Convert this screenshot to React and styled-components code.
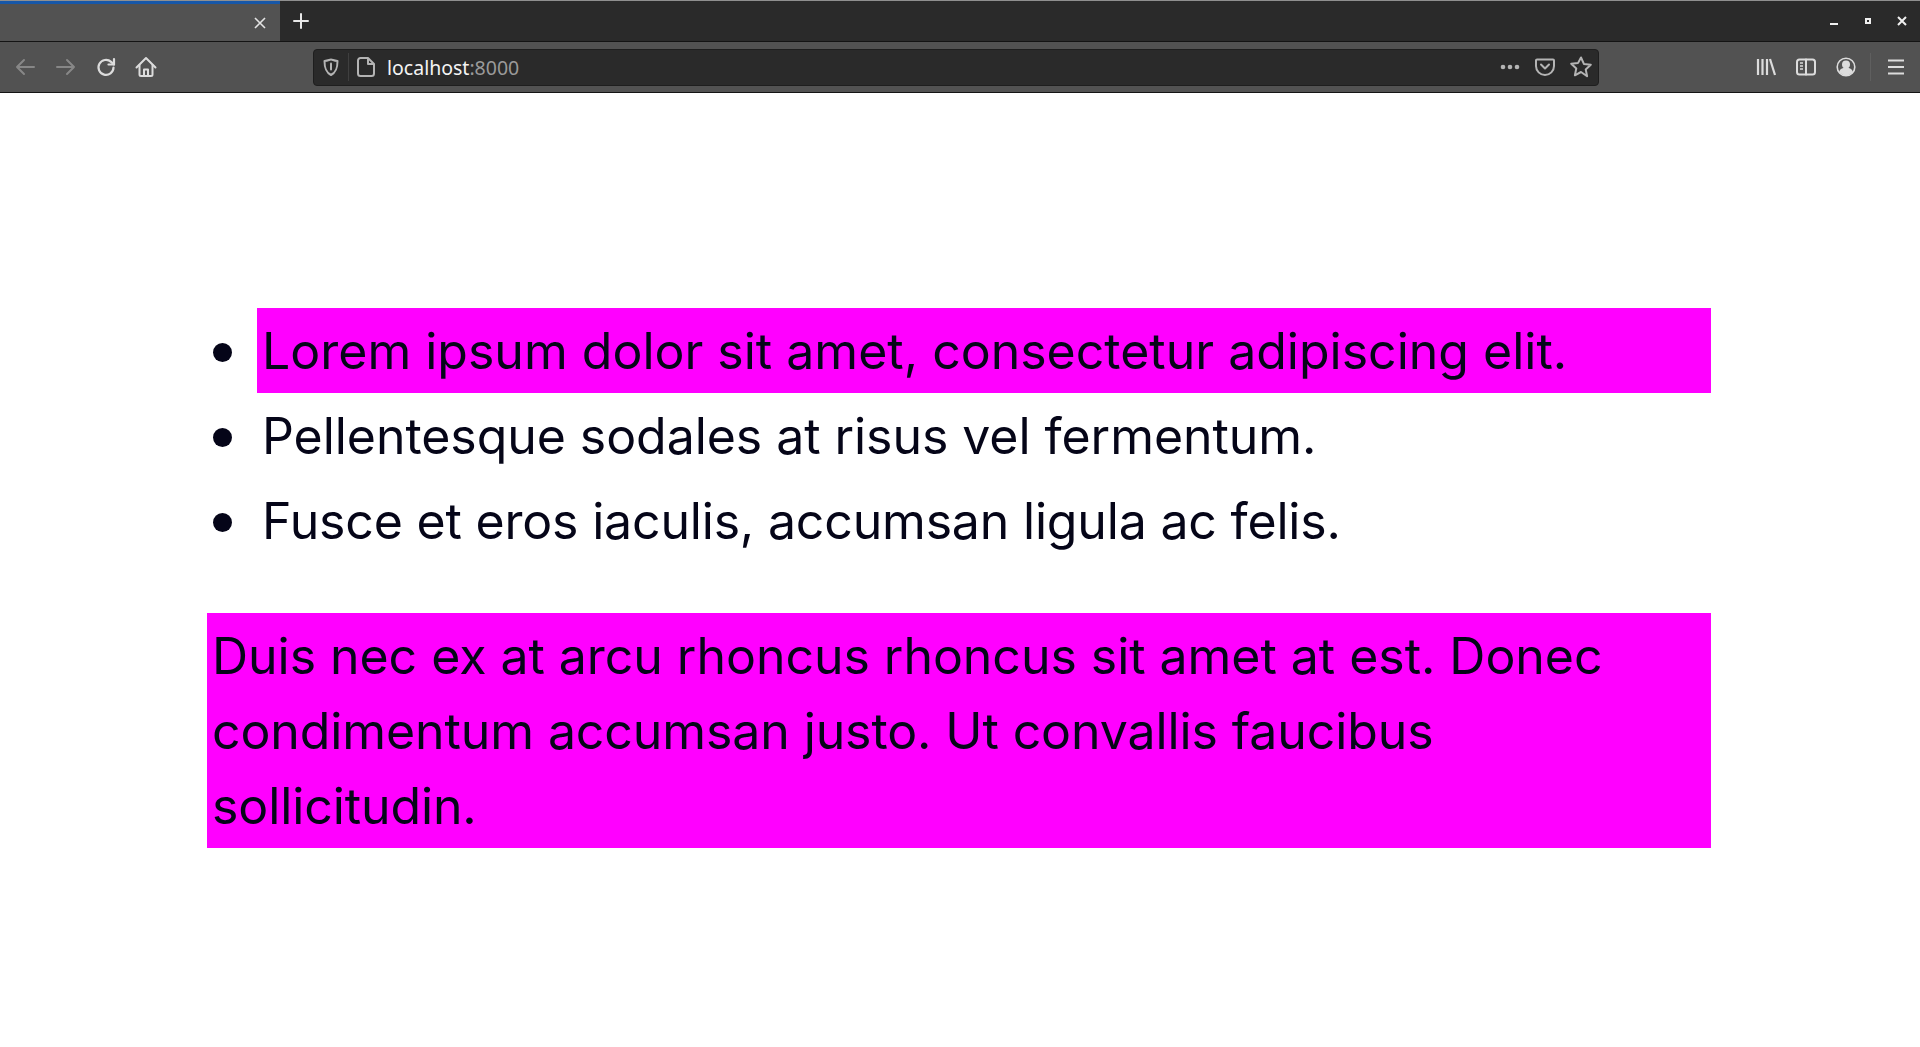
import React from 'react';
import styled, { createGlobalStyle } from 'styled-components';

const Global = createGlobalStyle`
  html, body { margin: 0; padding: 0; background: #fff; }
  body { font-family: "Inter", sans-serif; overflow: hidden; }
`;

const Chrome = styled.header`
  display: flex;
  flex-direction: column;
  border-bottom: 1px solid #141414;
`;
const TabStrip = styled.div`
  display: flex;
  align-items: stretch;
  height: 42px;
  box-sizing: border-box;
  background: #2a2a2a;
  border-top: 1px solid #8f8f8f;
  border-bottom: 1px solid #141414;
`;
const Tab = styled.div`
  display: flex;
  align-items: center;
  justify-content: flex-end;
  width: 280px;
  padding-right: 13px;
  box-sizing: border-box;
  background: #525252;
  border-top: 3px solid #1757a8;
`;
const NewTab = styled.div`
  display: flex;
  align-items: center;
  justify-content: center;
  width: 42px;
  padding-bottom: 1px;
`;
const Spacer = styled.div`
  flex: 1;
`;
const WindowControls = styled.div`
  display: flex;
  align-items: center;
  padding-right: 1px;
`;
const WinButton = styled.div`
  display: flex;
  align-items: center;
  justify-content: center;
  width: 34px;
`;
const Toolbar = styled.div`
  display: flex;
  align-items: center;
  height: 50px;
  padding-left: 5px;
  background: #525252;
`;
const NavButton = styled.div`
  display: flex;
  align-items: center;
  justify-content: center;
  flex: none;
  width: ${p => p.$w || 40.5}px;
  height: 100%;
  color: ${p => (p.$dim ? '#878787' : '#dcdcdc')};
`;
const UrlBar = styled.div`
  display: flex;
  align-items: center;
  flex: none;
  width: 1285.5px;
  height: 37px;
  margin-left: 147.5px;
  box-sizing: border-box;
  background: #2a2a2a;
  border: 1px solid #1e1e1e;
  border-radius: 4px;
  color: #b8b8b8;
`;
const UrlIcon = styled.div`
  display: flex;
  align-items: center;
  justify-content: center;
  width: ${p => p.$w}px;
  flex: none;
  color: ${p => p.$color || '#b4b4b4'};
`;
const Divider = styled.div`
  width: 1px;
  height: 28px;
  flex: none;
  margin-left: ${p => p.$gap || 0}px;
  background: ${p => p.$color || '#3f3f3f'};
`;
const UrlText = styled.div`
  font-family: "Noto Sans", sans-serif;
  font-size: 19.5px;
  line-height: 37px;
  color: #f4f4f4;
  margin-left: 4px;
  span { color: #9a9a9a; }
`;
const Tools = styled.div`
  display: flex;
  align-items: center;
  flex: none;
  height: 100%;
  margin-left: 147.5px;
`;
const Page = styled.main`
  width: 1504px;
  margin-left: 207px;
  padding-top: 215px;
  font-size: 50px;
  line-height: 75px;
  color: #050518;
  font-optical-sizing: none;
`;
const List = styled.ul`
  margin: 0 0 50px;
  padding: 0 0 0 50px;
  list-style: none;
`;
const Item = styled.li`
  position: relative;
  padding: 6px 5px 4px;
  letter-spacing: ${p => p.$track || 0}px;
  background: ${p => (p.$hl ? '#ff00ff' : 'transparent')};
  &::before {
    content: "";
    position: absolute;
    left: -44px;
    top: 35px;
    width: 19px;
    height: 19px;
    border-radius: 50%;
    background: #050518;
  }
`;
const Para = styled.p`
  margin: 0;
  padding: 5.5px 5px 4.5px;
  background: #ff00ff;
`;
const Tracked = styled.span`
  letter-spacing: ${p => p.$track}px;
`;

const S = p => (
  <svg width={p.w || 22} height={p.h || 22} viewBox={`0 0 ${p.w || 22} ${p.h || 22}`} fill="none" stroke="currentColor" strokeWidth={p.sw || 2} strokeLinecap="round" strokeLinejoin="round">
    {p.children}
  </svg>
);

export default function App() {
  return (
    <>
      <Global />
      <Chrome>
        <TabStrip>
          <Tab>
            <svg width="14" height="14" viewBox="0 0 14 14" stroke="#e4e4e4" strokeWidth="1.6"><path d="M2 2l10 10M12 2L2 12" /></svg>
          </Tab>
          <NewTab>
            <svg width="18" height="18" viewBox="0 0 18 18" stroke="#e8e8e8" strokeWidth="2" strokeLinecap="round"><path d="M9 2v14M2 9h14" /></svg>
          </NewTab>
          <Spacer />
          <WindowControls>
            <WinButton>
              <svg width="10" height="10" viewBox="0 0 10 10"><rect x="1" y="7" width="8" height="2" fill="#f0f0f0" /></svg>
            </WinButton>
            <WinButton>
              <svg width="8" height="8" viewBox="0 0 8 8"><path fillRule="evenodd" d="M1 1h6v6H1zM3 3v2h2V3z" fill="#f0f0f0" /></svg>
            </WinButton>
            <WinButton>
              <svg width="10" height="10" viewBox="0 0 10 10" stroke="#f0f0f0" strokeWidth="2"><path d="M1 1l8 8M9 1L1 9" /></svg>
            </WinButton>
          </WindowControls>
        </TabStrip>
        <Toolbar>
          <NavButton $dim>
            <S><path d="M20 11H3M10 4l-7 7 7 7" /></S>
          </NavButton>
          <NavButton $dim>
            <S><path d="M2 11h17M12 4l7 7-7 7" /></S>
          </NavButton>
          <NavButton>
            <S sw={2.2}><path d="M18.5 11.5a7.5 7.5 0 1 1-2.4-5.6L19 8.5" /><path d="M19 3v5.500h-5.500" /></S>
          </NavButton>
          <NavButton $w={39}>
            <S sw={2}><path d="M1.500 11.500L11 2l9.500 9.500" /><path d="M4.500 9v9.500a1.500 1.500 0 0 0 1.500 1.500h10a1.500 1.500 0 0 0 1.500-1.500V9" /><path d="M9 20v-6.500h4V20" /></S>
          </NavButton>
          <UrlBar>
            <UrlIcon $w={34}>
              <S w={18} h={20}><path d="M2.500 4c4-.5 5-1.500 6.500-1.500S11.500 3.500 15.500 4c0 6.500-1 11-6.500 14C3.500 15 2.500 10.500 2.500 4z" /><path d="M9 6.500v6" /></S>
            </UrlIcon>
            <Divider />
            <UrlIcon $w={34}>
              <svg width="18" height="20" viewBox="0 0 18 20" fill="none" stroke="currentColor" strokeWidth="2" strokeLinejoin="round"><path d="M3.500 1h7.500l6 6v9.500a2.500 2.500 0 0 1-2.500 2.500h-11a2.500 2.500 0 0 1-2.500-2.500v-13a2.500 2.500 0 0 1 2.500-2.500z" /><path d="M11 1v6h6" /></svg>
            </UrlIcon>
            <UrlText>localhost<span>:8000</span></UrlText>
            <Spacer />
            <UrlIcon $w={24}>
              <svg width="20" height="6" viewBox="0 0 20 6" fill="currentColor"><circle cx="3" cy="3" r="2.300" /><circle cx="10" cy="3" r="2.300" /><circle cx="17" cy="3" r="2.300" /></svg>
            </UrlIcon>
            <UrlIcon $w={46}>
              <S><path d="M3 3.500h16a1 1 0 0 1 1 1V10a9 9 0 0 1-18 0V4.500a1 1 0 0 1 1-1z" /><path d="M7 8.500l4 4 4-4" /></S>
            </UrlIcon>
            <UrlIcon $w={26}>
              <S w={24} h={24}><path d="M12 2.500l2.900 6.400 6.900.8-5.100 4.700 1.400 6.900L12 17l-6.100 3.300 1.400-6.900-5.100-4.700 6.900-.8z" /></S>
            </UrlIcon>
            <UrlIcon $w={4} />
          </UrlBar>
          <Tools>
            <NavButton $w={40}>
              <S sw={2.2}><path d="M3 3v16M7.500 3v16M12 3v16M15 3l5 16" strokeLinecap="butt" /></S>
            </NavButton>
            <NavButton $w={40}>
              <S sw={2}><rect x="2" y="3.500" width="18" height="15" rx="2.500" /><path d="M11 3.500v15" /><path d="M5 7h3M5 10h3M5 13h3" strokeWidth="1.500" strokeLinecap="butt" /></S>
            </NavButton>
            <NavButton $w={40}>
              <S sw={1.6}><circle cx="11" cy="11" r="8.800" /><circle cx="11" cy="8.500" r="3.200" fill="currentColor" /><path d="M5 16c.6-3 3-3.500 6-3.500s5.400.5 6 3.500c-1.500 1.500-3.500 2.500-6 2.500S6.500 17.500 5 16z" fill="currentColor" /></S>
            </NavButton>
            <Divider $color="#5f5f5f" $gap={4} />
            <NavButton $w={49}>
              <S sw={2.2}><path d="M3 4.500h16M3 11h16M3 17.500h16" strokeLinecap="butt" /></S>
            </NavButton>
          </Tools>
        </Toolbar>
      </Chrome>
      <Page>
        <List>
          <Item $hl>Lorem ipsum dolor sit amet, consectetur adipiscing elit.</Item>
          <Item $track={-0.055}>Pellentesque sodales at risus vel fermentum.</Item>
          <Item $track={-0.18}>Fusce et eros iaculis, accumsan ligula ac felis.</Item>
        </List>
        <Para>
          <Tracked $track={-0.04}>Duis nec ex at arcu rhoncus rhoncus sit amet at est. Donec </Tracked>
          <Tracked $track={-0.1}>condimentum accumsan justo. Ut convallis faucibus sollicitudin.</Tracked>
        </Para>
      </Page>
    </>
  );
}
